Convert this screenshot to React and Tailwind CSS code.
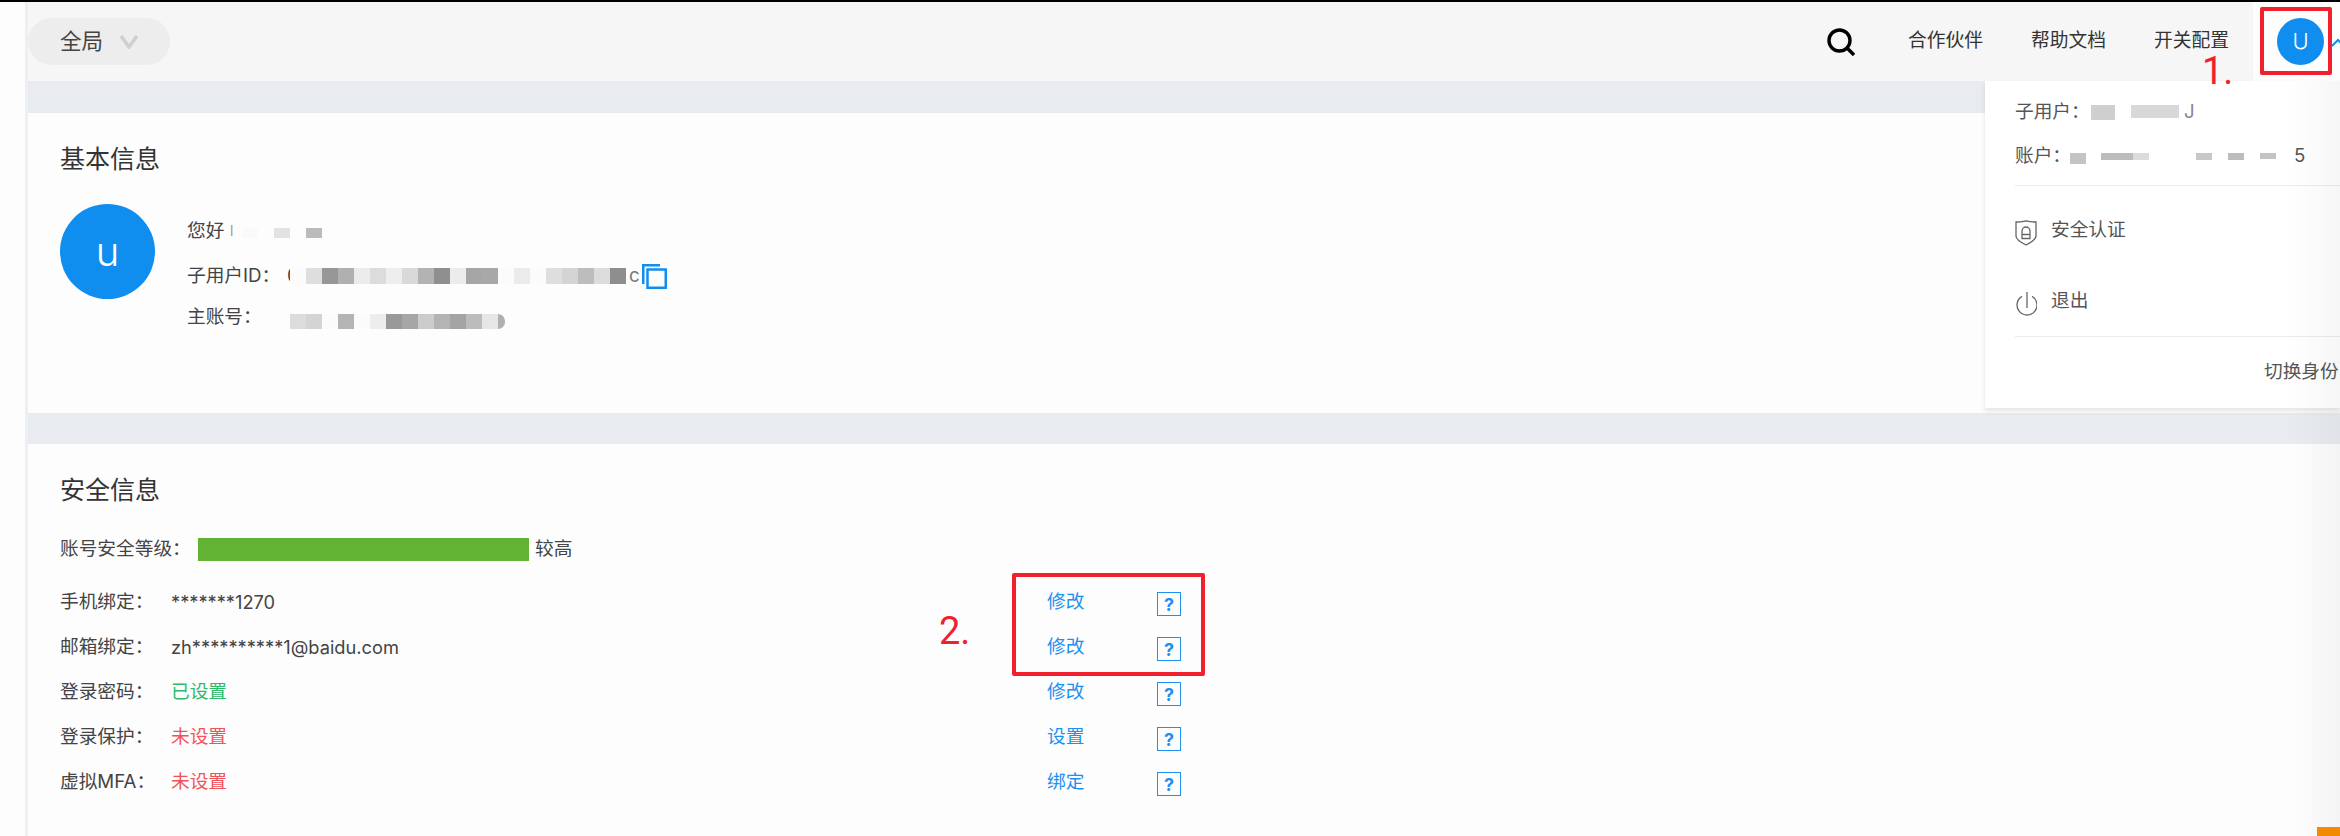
import React from 'react';

const greet = ['bg-[#fafafa]', 'bg-[#fdfdfd]', 'bg-[#e2e2e2]', 'bg-[#fdfdfd]', 'bg-[#bbbbbb]'];
const uid = ['bg-[#fbfbfb]', 'bg-[#dedede]', 'bg-[#979797]', 'bg-[#b0b0b0]', 'bg-[#ececec]', 'bg-[#dcdcdc]', 'bg-[#eeeeee]', 'bg-[#d9d9d9]', 'bg-[#b3b3b3]', 'bg-[#8f8f8f]', 'bg-[#ececec]', 'bg-[#a6a6a6]', 'bg-[#a8a8a8]', 'bg-[#fbfbfb]', 'bg-[#ebebeb]', 'bg-[#fbfbfb]', 'bg-[#dedede]', 'bg-[#d4d4d4]', 'bg-[#bdbdbd]', 'bg-[#dcdcdc]', 'bg-[#8e8e8e]'];
const main = ['bg-[#dcdcdc]', 'bg-[#d4d4d4]', 'bg-[#fbfbfb]', 'bg-[#b4b4b4]', 'bg-[#fbfbfb]', 'bg-[#ededed]', 'bg-[#999999]', 'bg-[#a6a6a6]', 'bg-[#cccccc]', 'bg-[#b4b4b4]', 'bg-[#a4a4a4]', 'bg-[#bcbcbc]', 'bg-[#e6e6e6]'];

const rows = [
  { label: '手机绑定：', value: '*******1270', tone: 'text-[18.25px] text-[#444]', action: '修改' },
  { label: '邮箱绑定：', value: 'zh**********1@baidu.com', tone: 'text-[18.25px] text-[#444]', action: '修改' },
  { label: '登录密码：', value: '已设置', tone: 'text-[#2dbb6b]', action: '修改' },
  { label: '登录保护：', value: '未设置', tone: 'text-[#f0525a]', action: '设置' },
  { label: '虚拟MFA：', value: '未设置', tone: 'text-[#f0525a]', action: '绑定' },
];

function Mosaic({ cells, height }) {
  return (
    <span className="flex">
      {cells.map((c, i) => (
        <span key={i} className={`w-[16px] ${height} ${c}`} />
      ))}
    </span>
  );
}

function Header() {
  return (
    <header className="flex h-[79px] items-center justify-between bg-[#f6f6f6]">
      <button className="flex h-[47px] w-[142px] items-center rounded-full bg-[#ededed] pl-[32px] text-[21.5px] text-[#444]">
        全局
        <svg viewBox="0 0 18 14" className="ml-[17px] h-[14px] w-[18px]" fill="none" stroke="#cfcfcf" strokeWidth="3.5">
          <path d="M1 1l8 11 8-11" />
        </svg>
      </button>
      <div className="flex h-full items-center">
        <svg viewBox="0 0 28 28" className="h-[28px] w-[28px]" fill="none" stroke="#000" strokeWidth="3.4">
          <circle cx="12.5" cy="12.5" r="10.5" />
          <path d="M20 20l7 7" />
        </svg>
        <nav className="ml-[53px] flex gap-[48px] text-[18.75px] text-[#333]">
          <span>合作伙伴</span>
          <span>帮助文档</span>
          <span>开关配置</span>
        </nav>
        <div className="ml-[24px] flex h-full w-[87px] items-center bg-[#fdfdfd] pl-[24px]">
          <div className="flex h-[47px] w-[47px] shrink-0 items-center justify-center rounded-full bg-[#108ef0] text-[22px] font-light text-white">U</div>
          <svg viewBox="0 0 10 10" className="ml-[8px] h-[10px] w-[10px] shrink-0" fill="none" stroke="#108ef0" strokeWidth="2">
            <path d="M0 9l6-6 6 6" />
          </svg>
        </div>
      </div>
    </header>
  );
}

function BasicInfo() {
  return (
    <section className="h-[300px] bg-[#fdfdfd] pl-[32px] pt-[33px]">
      <h2 className="text-[25px] leading-[26px] text-[#333]">基本信息</h2>
      <div className="mt-[32px] flex">
        <div className="flex h-[95px] w-[95px] items-center justify-center rounded-full bg-[#108ef0] text-[40px] font-light text-white">u</div>
        <div className="ml-[32px] flex flex-col pt-[12px] text-[18.7px] leading-[30px] text-[#444]">
          <div className="flex h-[30px] items-center">
            <span className="w-[43px]">您好</span>
            <span className="w-[12px] text-[14px] text-[#999]">l</span>
            <Mosaic cells={greet} height="h-[10px] mt-[4px]" />
          </div>
          <div className="mt-[15px] flex h-[30px] items-center">
            <span className="w-[100px]">子用户ID：</span>
            <span className="w-[3px]">0</span>
            <Mosaic cells={uid} height="h-[16px]" />
            <span className="w-[16px] pl-[3px] text-[#777]">c</span>
            <svg viewBox="0 0 25 25" className="h-[25px] w-[25px]" fill="none" stroke="#108ef0" strokeWidth="2.5">
              <path d="M1.25 20V1.25H18" />
              <rect x="5.5" y="5.5" width="18.25" height="18.25" />
            </svg>
          </div>
          <div className="mt-[11px] flex h-[30px] items-center">
            <span className="w-[103px]">主账号：</span>
            <Mosaic cells={main} height="h-[15px] mt-[9px]" />
            <span className="mt-[9px] h-[15px] w-[7px] rounded-r-full bg-[#b0b0b0]" />
          </div>
        </div>
      </div>
    </section>
  );
}

function SecurityInfo() {
  return (
    <section className="flex-1 bg-[#fdfdfd] pl-[32px] pt-[33px] text-[18.7px] text-[#444]">
      <h2 className="text-[25px] leading-[26px] text-[#333]">安全信息</h2>
      <div className="mt-[34px] flex h-[24px] items-center">
        <span className="w-[138px]">账号安全等级：</span>
        <span className="h-[23px] w-[331px] bg-[#62b233]" />
        <span className="ml-[6px]">较高</span>
      </div>
      <div className="mt-[19px]">
        {rows.map((r) => (
          <div key={r.label} className="flex h-[45px] items-center">
            <span className="w-[111px]">{r.label}</span>
            <span className={`w-[876px] ${r.tone}`}>{r.value}</span>
            <a className="w-[110px] text-[#1e90f0]">{r.action}</a>
            <span className="mt-[3px] flex h-[24px] w-[24px] items-center justify-center border border-[#1e90f0] text-[18px] font-bold text-[#1e90f0]">?</span>
          </div>
        ))}
      </div>
    </section>
  );
}

function UserMenu() {
  return (
    <div className="absolute right-0 top-[79px] h-[327px] w-[355px] bg-white pl-[30px] pt-[20px] text-[18.7px] text-[#555] shadow-[0_3px_5px_rgba(0,0,0,0.1)]">
      <div className="flex h-[22px] items-center">
        <span className="w-[76px] whitespace-nowrap">子用户：</span>
        <span className="flex">
          <span className="h-[15px] w-[24px] bg-[#cfcfcf]" />
          <span className="ml-[16px] h-[13px] w-[48px] bg-[#d8d8d8]" />
        </span>
        <span className="ml-[5px] text-[#888]">J</span>
      </div>
      <div className="mt-[22px] flex h-[22px] items-center">
        <span className="w-[55px] whitespace-nowrap">账户：</span>
        <span className="mt-[4px] flex">
          <span className="h-[11px] w-[16px] bg-[#c4c4c4]" />
          <span className="ml-[15px] h-[7px] w-[32px] bg-[#bcbcbc]" />
          <span className="h-[7px] w-[16px] bg-[#dcdcdc]" />
          <span className="ml-[47px] h-[7px] w-[16px] bg-[#c8c8c8]" />
          <span className="ml-[16px] h-[7px] w-[16px] bg-[#bcbcbc]" />
          <span className="ml-[16px] h-[6px] w-[16px] bg-[#c4c4c4]" />
        </span>
        <span className="ml-[18px]">5</span>
      </div>
      <div className="mt-[18px] h-px bg-[#e8ebf0]" />
      <div className="mt-[31px] flex h-[26px] items-center gap-[14px]">
        <svg viewBox="0 0 22 26" className="mt-[5px] h-[26px] w-[22px]" fill="none" stroke="#666" strokeWidth="1.3">
          <path d="M1 2c3 0 7-.5 10-1.200 3 .7 7 1.200 10 1.200v14c0 4-6 7-10 9-4-2-10-5-10-9z" />
          <path d="M7 18.500V11a4 4 0 018 0v7.500zM7 14.500h8" />
        </svg>
        <span>安全认证</span>
      </div>
      <div className="mt-[45px] flex h-[26px] items-center gap-[14px]">
        <svg viewBox="0 0 22 26" className="mt-[5px] h-[26px] w-[22px]" fill="none" stroke="#666" strokeWidth="1.3">
          <path d="M12 1v16M7 5.340A10 10 0 1017 5.340" />
        </svg>
        <span>退出</span>
      </div>
      <div className="mt-[22px] h-px bg-[#e8ebf0]" />
      <div className="mt-[21px] whitespace-nowrap pl-[249px]">切换身份</div>
    </div>
  );
}

export default function App() {
  return (
    <div className="relative flex h-[836px] w-[2340px] overflow-hidden border-t-2 border-black bg-[#fdfdfd] font-['Inter','Noto_Sans_CJK_SC',sans-serif]">
      <div className="w-[28px] shrink-0 border-r-[3px] border-[#eeeff3]" />
      <main className="flex min-w-0 flex-1 flex-col bg-[#e8ebf0]">
        <Header />
        <div className="h-[32px] shrink-0" />
        <BasicInfo />
        <div className="h-[31px] shrink-0" />
        <SecurityInfo />
      </main>

      <UserMenu />

      {/* faint shade along the right edge of the capture */}
      <div className="pointer-events-none absolute bottom-0 right-0 top-[79px] w-[50px] bg-gradient-to-r from-transparent to-[#00000009]" />

      {/* annotations drawn over the page */}
      <div className="absolute left-[2260px] top-[5px] h-[68px] w-[72px] rounded-[2px] border-4 border-[#f0202e]" />
      <div className="absolute left-[2202px] top-[50px] font-['Roboto'] text-[38px] leading-[38px] text-[#f0202e]">1.</div>
      <div className="absolute left-[1012px] top-[571px] h-[103px] w-[193px] rounded-[2px] border-4 border-[#f0202e]" />
      <div className="absolute left-[939px] top-[610px] font-['Roboto'] text-[38px] leading-[38px] text-[#f0202e]">2.</div>
      <div className="absolute bottom-0 right-0 h-[9px] w-[23px] bg-[#f38b00]" />
    </div>
  );
}
